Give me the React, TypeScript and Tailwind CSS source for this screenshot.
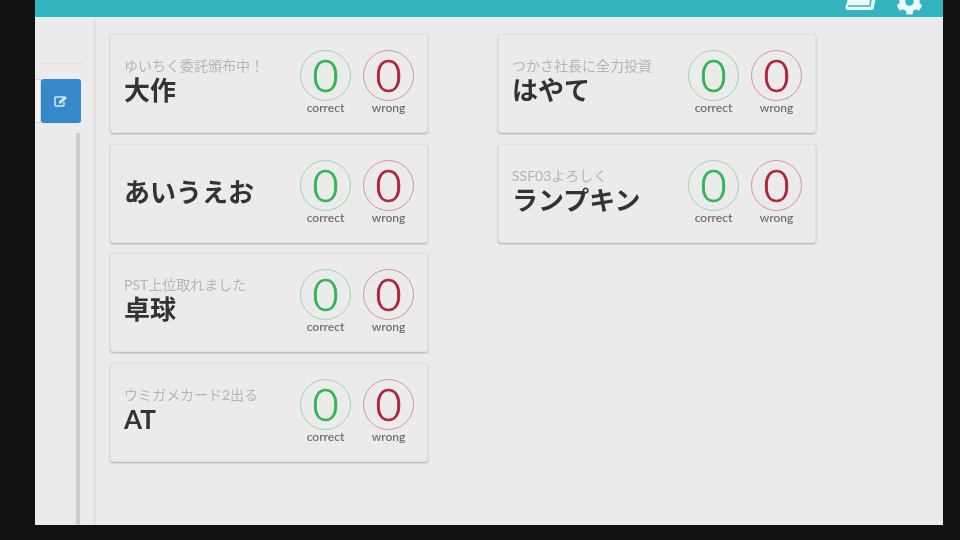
import { FaCog } from 'react-icons/fa';

type Item = { note: string; name: string };

const leftItems: Item[] = [
  { note: 'ゆいちく委託頒布中！', name: '大作' },
  { note: '', name: 'あいうえお' },
  { note: 'PST上位取れました', name: '卓球' },
  { note: 'ウミガメカード2出る', name: 'AT' },
];

const rightItems: Item[] = [
  { note: 'つかさ社長に全力投資', name: 'はやて' },
  { note: 'SSF03よろしく', name: 'ランプキン' },
];

function Counter({ label, circle, digit }: { label: string; circle: string; digit: string }) {
  return (
    <div className="flex w-[51px] flex-col items-center">
      <div className={`flex h-[51px] w-[51px] items-center justify-center rounded-full border-[1.5px] ${circle}`}>
        <span className={`text-[45px] leading-none font-light [-webkit-text-stroke:0.7px] ${digit}`}>0</span>
      </div>
      <span className="text-[12px] leading-[14px] font-semibold whitespace-nowrap text-[#707070]">{label}</span>
    </div>
  );
}

function Card({ note, name }: Item) {
  return (
    <div className="flex h-[99px] w-[318px] items-start rounded-[3px] border border-[#e0e0e0] bg-[#ebebeb] pt-[15px] pr-[13px] pl-[13px] shadow-[0_1px_2px_rgba(0,0,0,0.25)]">
      <div className="flex h-[51px] flex-1 flex-col pt-[8px]">
        {note && <div className="text-[14px] leading-[15px] text-[#b5b5b5]">{note}</div>}
        <div className={`text-[26px] leading-[30px] font-bold text-[#333] ${note ? 'mt-[2px]' : 'mt-[9px]'}`}>{name}</div>
      </div>
      <div className="flex gap-[12px]">
        <Counter label="correct" circle="border-[#9dd3aa]" digit="text-[#2fb552]" />
        <Counter label="wrong" circle="border-[#cf95a2]" digit="text-[#b01f38]" />
      </div>
    </div>
  );
}

function App() {
  return (
    <div
      className="h-[540px] w-[960px] overflow-hidden bg-[#111] pr-[17px] pb-[15px] pl-[35px] blur-[0.6px]"
      style={{ fontFamily: 'Lato, "Noto Sans CJK JP", sans-serif' }}
    >
      <div className="flex h-full flex-col bg-[#ebebeb]">
        {/* Header */}
        <header className="flex h-[18px] shrink-0 items-end justify-end gap-[18px] overflow-hidden border-b border-[#d5f8fa] bg-[#33b5c1] pr-[20px]">
          <svg width="34" height="22" viewBox="0 0 34 22" className="mb-[5px] shrink-0" fill="none">
            <path d="M6 2 H33 L30 17 Q29.500 20 27 20 H4 Q1 20 1.500 17 Z" fill="#eaf9fa" />
            <path d="M4 16 H26 L28 2" stroke="#33b5c1" strokeWidth="1.500" />
          </svg>
          <FaCog className="mb-[2px] h-[27px] w-[27px] shrink-0 text-[#eaf9fa]" />
        </header>

        <div className="flex min-h-0 flex-1">
          {/* Sidebar */}
          <aside className="flex w-[61px] shrink-0 flex-col border-r-2 border-[#e0e0e0] pt-[45px]">
            <div className="mr-[12px] h-px bg-[#e2e2e2]" />
            <div className="mt-[15px] flex">
              <div className="h-[44px] w-[6px] border-y border-r border-[#d5d5d5] bg-[#f2f2f2]" />
              <button className="flex h-[44px] w-[40px] items-center justify-center rounded-[3px] bg-[#3389c9]">
                <svg width="14" height="12" viewBox="0 0 14 12" fill="none" stroke="#dceaf5" strokeWidth="1.500">
                  <path d="M10 2 H2 Q1 2 1 3 V10 Q1 11 2 11 H9 Q10 11 10 10 V7" />
                  <path d="M5 6.500 L11 1 L13 3 L7 8.500 H5 Z" fill="#dceaf5" stroke="none" />
                </svg>
              </button>
            </div>
            <div className="mt-[10px] ml-[41px] w-[4px] flex-1 bg-[#cdcdcd]" />
          </aside>

          {/* Cards */}
          <main className="flex flex-1 items-start gap-[70px] pt-[16px] pl-[14px]">
            <div className="flex flex-col gap-[10.500px]">
              {leftItems.map((item) => (
                <Card key={item.name} {...item} />
              ))}
            </div>
            <div className="flex flex-col gap-[10.500px]">
              {rightItems.map((item) => (
                <Card key={item.name} {...item} />
              ))}
            </div>
          </main>
        </div>
      </div>
    </div>
  );
}

export default App;
